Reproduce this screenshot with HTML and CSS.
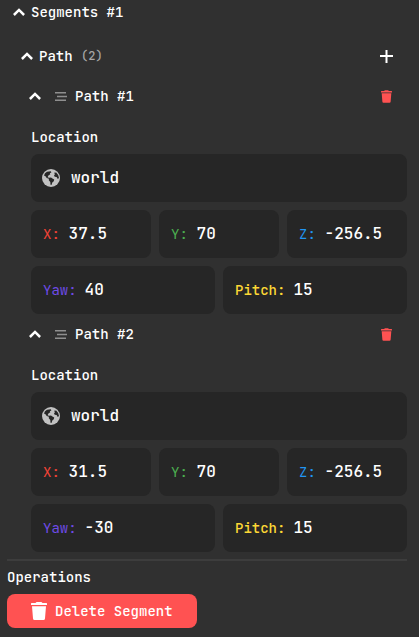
FILE: index.html
```html
<!DOCTYPE html>
<html lang="en">
<head>
<meta charset="utf-8">
<title>Segments</title>
<link rel="stylesheet" href="styles.css">
</head>
<body>
<svg class="defs" aria-hidden="true">
  <symbol id="chevron" viewBox="0 0 12 8"><path d="M.9 7L6 1.9L11.1 7" fill="none" stroke="currentColor" stroke-width="2.5"/></symbol>
  <symbol id="plus" viewBox="0 0 13 13"><path d="M6.5 0V13M0 6H13" fill="none" stroke="currentColor" stroke-width="2"/></symbol>
  <symbol id="lines" viewBox="0 0 12 9"><path d="M0 .8H11M2 4.5H12M0 8.2H11" fill="none" stroke="currentColor" stroke-width="1.4"/></symbol>
  <symbol id="trash" viewBox="0 0 16 18"><path d="M0 1.6Q0 1 .6 1H4.5L5.2 .3Q5.5 0 6 0H10Q10.5 0 10.8 .3L11.5 1H15.4Q16 1 16 1.6V3H0ZM1 4.2H15L14 16.5Q13.9 18 12.4 18H3.6Q2.1 18 2 16.5Z" fill="currentColor"/></symbol>
  <symbol id="globe" viewBox="0 0 18 18"><circle cx="9" cy="9" r="9" fill="currentColor"/><path d="M3 4.2L5 2.7L8.8 2.2L9.4 3.4L7.8 4.2L8.3 5.3L6.4 6.6L5.6 8.2L7 8.7L9 8.6L10.8 9.8L12.2 10.5L11.8 12.3L10.3 13.6L9.5 15.9L8.5 15.7L8.3 13L6.8 11.3L6.9 9.8L4.7 8.9L3.5 7.2L2 6.6ZM12 3.7L14.2 3.4L16.2 6L17 9L15.8 10L14.6 8L12.7 7.7L12 6.3L13 5.2Z" fill="#262626"/></symbol>
</svg>
<main class="panel">
  <header class="row row-segment"><svg class="chevron"><use href="#chevron"/></svg><span>Segments #1</span></header>
  <section class="paths">
    <header class="row row-paths"><svg class="chevron"><use href="#chevron"/></svg><span>Path</span><span class="count">(2)</span><svg class="plus"><use href="#plus"/></svg></header>
    <article class="path">
      <header class="row row-path"><svg class="chevron"><use href="#chevron"/></svg><svg class="lines"><use href="#lines"/></svg><span>Path #1</span><svg class="remove"><use href="#trash"/></svg></header>
      <div class="label">Location</div>
      <div class="fields">
        <div class="field world"><svg class="globe"><use href="#globe"/></svg><span class="value">world</span></div>
        <div class="field third"><span class="key x">X:</span><span class="value">37.5</span></div>
        <div class="field third"><span class="key y">Y:</span><span class="value">70</span></div>
        <div class="field third"><span class="key z">Z:</span><span class="value">-256.5</span></div>
        <div class="field half"><span class="key yaw">Yaw:</span><span class="value">40</span></div>
        <div class="field half"><span class="key pitch">Pitch:</span><span class="value">15</span></div>
      </div>
    </article>
    <article class="path">
      <header class="row row-path"><svg class="chevron"><use href="#chevron"/></svg><svg class="lines"><use href="#lines"/></svg><span>Path #2</span><svg class="remove"><use href="#trash"/></svg></header>
      <div class="label">Location</div>
      <div class="fields">
        <div class="field world"><svg class="globe"><use href="#globe"/></svg><span class="value">world</span></div>
        <div class="field third"><span class="key x">X:</span><span class="value">31.5</span></div>
        <div class="field third"><span class="key y">Y:</span><span class="value">70</span></div>
        <div class="field third"><span class="key z">Z:</span><span class="value">-256.5</span></div>
        <div class="field half"><span class="key yaw">Yaw:</span><span class="value">-30</span></div>
        <div class="field half"><span class="key pitch">Pitch:</span><span class="value">15</span></div>
      </div>
    </article>
  </section>
  <footer class="operations">
    <div class="title">Operations</div>
    <button class="delete"><svg class="trash"><use href="#trash"/></svg><span>Delete Segment</span></button>
  </footer>
</main>
</body>
</html>
```
FILE: styles.css
```css
* { box-sizing: border-box; }
body {
  margin: 0;
  height: 637px;
  overflow: hidden;
  background: #303030;
  color: #fff;
  font: 500 14px/20px "JetBrains Mono", "DejaVu Sans Mono", monospace;
}
.defs { position: absolute; width: 0; height: 0; }
svg { flex: none; display: block; }
.row { display: flex; align-items: center; }
.row-segment { height: 24px; padding-left: 13px; }
.paths { padding: 12px 12px 0 21px; }
.row-paths { height: 40px; }
.chevron { width: 12px; height: 8px; margin-right: 6px; color: #fff; }
.count { font-size: 12px; color: #a6a6a6; margin-left: 8.4px; }
.plus { width: 13px; height: 13px; margin: 0 14px 0 auto; color: #fff; }
.path { padding-left: 10px; }
.row-path { height: 40px; margin-left: -2px; }
.lines { width: 12px; height: 9px; margin: 1px 8px 0 8px; color: #8f8f8f; }
.remove { width: 11px; height: 13px; margin: 1px 15px 0 auto; color: #ff5252; }
.label { height: 38px; padding-top: 11px; }
.fields { display: grid; grid-template-columns: repeat(6, 1fr); gap: 8px; }
.field {
  display: flex;
  align-items: baseline;
  height: 48px;
  padding: 14px 12px 0;
  border-radius: 8px;
  background: #262626;
}
.world { grid-column: span 6; align-items: center; padding: 0 11px; }
.third { grid-column: span 2; }
.half { grid-column: span 3; }
.globe { width: 18px; height: 18px; margin: 0 11px 0 0; color: #c1c1c1; }
.value { font-size: 16px; color: #fff; }
.key { margin-right: 8.8px; font-weight: 400; }
.yaw, .pitch { margin-right: 8px; }
.x { color: #f44336; }
.y { color: #4caf50; }
.z { color: #2196f3; }
.yaw { color: #6f4be8; }
.pitch { color: #fdd835; font-weight: 500; }
.operations { margin: 7px 12px 0 7px; border-top: 2px solid #3d3d3d; }
.title { height: 33px; padding-top: 6px; }
.delete {
  display: flex;
  align-items: center;
  width: 190px;
  height: 34px;
  padding: 0 24px;
  border: 0;
  border-radius: 8px;
  background: #ff5252;
  color: #fff;
  font: inherit;
}
.trash { width: 16px; height: 18px; margin-right: 8px; }
```
